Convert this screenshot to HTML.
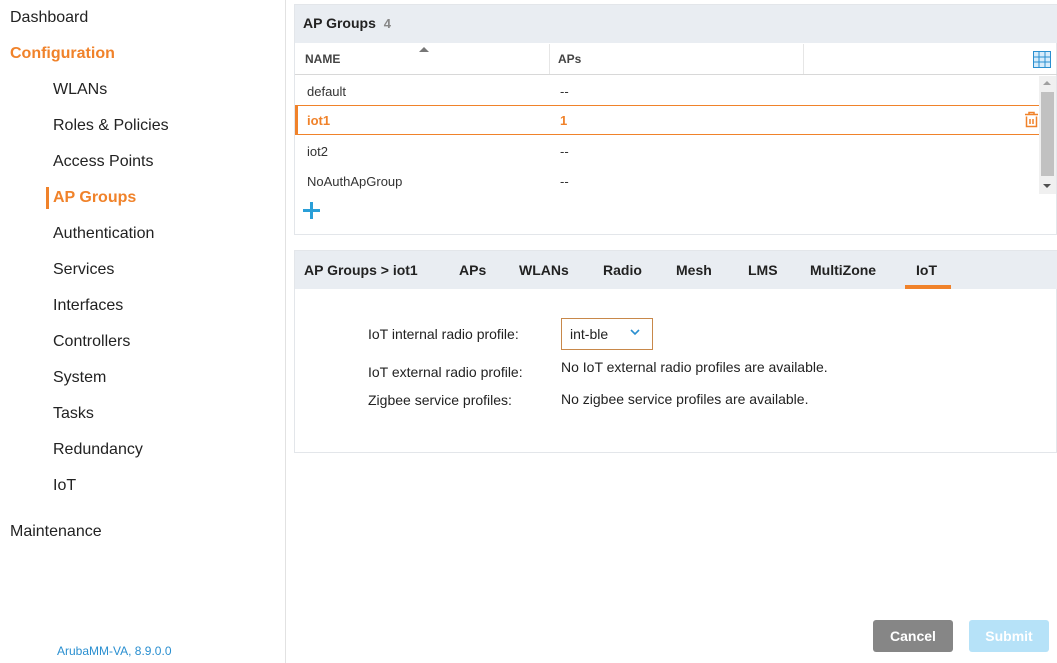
<!DOCTYPE html>
<html><head><style>
*{margin:0;padding:0;box-sizing:border-box}
body{width:1057px;height:663px;position:relative;background:#fff;font-family:"Liberation Sans",sans-serif;color:#222;overflow:hidden}
.a{position:absolute;white-space:nowrap}
.nav{font-size:16px;color:#222}
.sub{left:53px}
.tab{font-size:14px;font-weight:bold;color:#222;top:262px}
.cell{font-size:13px;color:#333}
</style></head><body>
<div class="a" style="left:285px;top:0;width:1px;height:663px;background:#e2e2e2"></div>
<div class="a nav" style="left:10px;top:9px">Dashboard</div>
<div class="a nav" style="left:10px;top:45px;color:#f0822a;font-weight:bold">Configuration</div>
<div class="a nav sub" style="top:81px">WLANs</div>
<div class="a nav sub" style="top:117px">Roles &amp; Policies</div>
<div class="a nav sub" style="top:153px">Access Points</div>
<div class="a" style="left:46px;top:187px;width:3px;height:22px;background:#f0822a"></div>
<div class="a nav sub" style="top:189px;color:#f0822a;font-weight:bold">AP Groups</div>
<div class="a nav sub" style="top:225px">Authentication</div>
<div class="a nav sub" style="top:261px">Services</div>
<div class="a nav sub" style="top:297px">Interfaces</div>
<div class="a nav sub" style="top:333px">Controllers</div>
<div class="a nav sub" style="top:369px">System</div>
<div class="a nav sub" style="top:405px">Tasks</div>
<div class="a nav sub" style="top:441px">Redundancy</div>
<div class="a nav sub" style="top:477px">IoT</div>
<div class="a nav" style="left:10px;top:523px">Maintenance</div>
<div class="a" style="left:57px;top:644px;font-size:12px;color:#2a8fd0">ArubaMM-VA, 8.9.0.0</div>

<!-- AP groups panel -->
<div class="a" style="left:294px;top:4px;width:763px;height:231px;border:1px solid #e3e6ea;background:#fff"></div>
<div class="a" style="left:295px;top:5px;width:762px;height:38px;background:#e9edf2"></div>
<div class="a" style="left:303px;top:15px;font-size:14px;font-weight:bold">AP Groups <span style="color:#888;font-size:13px;margin-left:4px">4</span></div>
<div class="a" style="left:295px;top:74px;width:762px;height:1px;background:#d8d8d8"></div>
<div class="a" style="left:549px;top:44px;width:1px;height:30px;background:#e6e6e6"></div>
<div class="a" style="left:803px;top:44px;width:1px;height:30px;background:#e6e6e6"></div>
<div class="a" style="left:305px;top:52px;font-size:12px;font-weight:bold;color:#444">NAME</div>
<div class="a" style="left:419px;top:47px;width:0;height:0;border-left:5px solid transparent;border-right:5px solid transparent;border-bottom:5px solid #777"></div>
<div class="a" style="left:558px;top:52px;font-size:12px;font-weight:bold;color:#444">APs</div>
<svg class="a" style="left:1033px;top:51px" width="18" height="17"><rect x="0.5" y="0.5" width="17" height="16" fill="#d7ecfb" stroke="#2a8fd0"/><path d="M6 1V16M12 1V16M1 6H17M1 11H17" stroke="#2a8fd0" stroke-width="1"/></svg>
<div class="a cell" style="left:307px;top:84px">default</div><div class="a cell" style="left:560px;top:84px">--</div>
<div class="a" style="left:295px;top:105px;width:745px;height:30px;border-top:1px solid #f0822a;border-bottom:1px solid #f0822a"></div>
<div class="a" style="left:295px;top:105px;width:3px;height:30px;background:#f0822a"></div>
<div class="a cell" style="left:307px;top:113px;color:#f0822a;font-weight:bold">iot1</div><div class="a cell" style="left:560px;top:113px;color:#f0822a;font-weight:bold">1</div>
<svg class="a" style="left:1023px;top:111px" width="17" height="17"><path d="M2 3.5H15M6 3.5V1.5H11V3.5M3.5 5.5V15.5H13.5V5.5M7 8V13M10 8V13" stroke="#f0822a" stroke-width="1.5" fill="none"/></svg>
<div class="a cell" style="left:307px;top:144px">iot2</div><div class="a cell" style="left:560px;top:144px">--</div>
<div class="a cell" style="left:307px;top:174px">NoAuthApGroup</div><div class="a cell" style="left:560px;top:174px">--</div>
<div class="a" style="left:1039px;top:76px;width:17px;height:118px;background:#f0f0f0"></div>
<div class="a" style="left:1041px;top:92px;width:13px;height:84px;background:#c1c1c1"></div>
<div class="a" style="left:1043px;top:81px;border-left:4px solid transparent;border-right:4px solid transparent;border-bottom:4px solid #a0a0a0"></div>
<div class="a" style="left:1043px;top:184px;border-left:4px solid transparent;border-right:4px solid transparent;border-top:4px solid #505050"></div>
<div class="a" style="left:303px;top:209px;width:17px;height:3px;background:#2a9fd8"></div>
<div class="a" style="left:310px;top:202px;width:3px;height:17px;background:#2a9fd8"></div>

<!-- tabs panel -->
<div class="a" style="left:294px;top:250px;width:763px;height:203px;border:1px solid #e3e6ea;background:#fff"></div>
<div class="a" style="left:295px;top:251px;width:762px;height:38px;background:#e9edf2"></div>
<div class="a tab" style="left:304px">AP Groups &gt; iot1</div>
<div class="a tab" style="left:459px">APs</div>
<div class="a tab" style="left:519px">WLANs</div>
<div class="a tab" style="left:603px">Radio</div>
<div class="a tab" style="left:676px">Mesh</div>
<div class="a tab" style="left:748px">LMS</div>
<div class="a tab" style="left:810px">MultiZone</div>
<div class="a tab" style="left:916px">IoT</div>
<div class="a" style="left:905px;top:285px;width:46px;height:4px;background:#f0822a"></div>
<div class="a" style="left:368px;top:326px;font-size:14px">IoT internal radio profile:</div>
<div class="a" style="left:368px;top:364px;font-size:14px">IoT external radio profile:</div>
<div class="a" style="left:368px;top:392px;font-size:14px">Zigbee service profiles:</div>
<div class="a" style="left:561px;top:318px;width:92px;height:32px;border:1px solid #c8884a"></div>
<div class="a" style="left:570px;top:326px;font-size:14px">int-ble</div>
<svg class="a" style="left:630px;top:329px" width="10" height="7"><path d="M1 1L5 5L9 1" stroke="#2a8fd0" stroke-width="1.6" fill="none"/></svg>
<div class="a" style="left:561px;top:359px;font-size:14px">No IoT external radio profiles are available.</div>
<div class="a" style="left:561px;top:391px;font-size:14px">No zigbee service profiles are available.</div>

<div class="a" style="left:873px;top:620px;width:80px;height:32px;background:#868686;border-radius:3px;color:#fff;font-weight:bold;font-size:14px;text-align:center;line-height:32px">Cancel</div>
<div class="a" style="left:969px;top:620px;width:80px;height:32px;background:#b6e2f8;border-radius:3px;color:#fff;font-weight:bold;font-size:14px;text-align:center;line-height:32px">Submit</div>
</body></html>
